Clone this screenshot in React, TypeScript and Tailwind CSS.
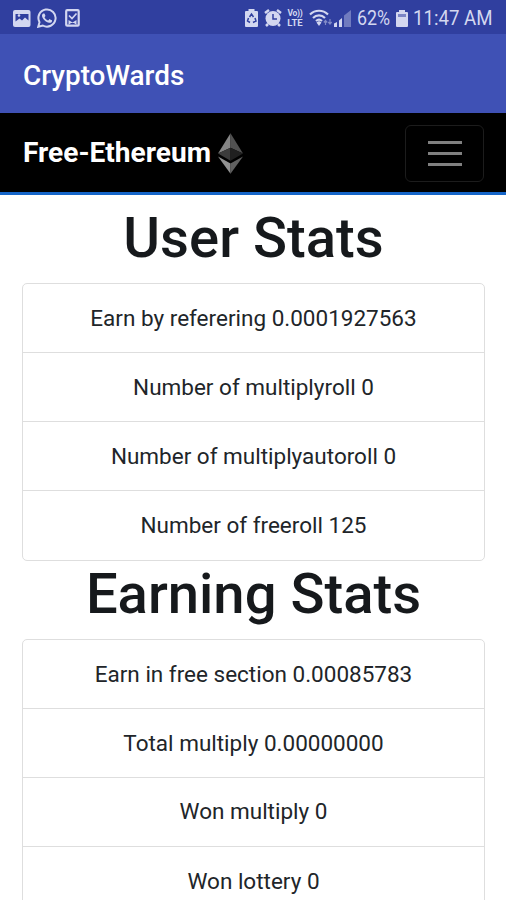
import type { ReactNode } from "react";

const userStats = [
  "Earn by referering 0.0001927563",
  "Number of multiplyroll 0",
  "Number of multiplyautoroll 0",
  "Number of freeroll 125",
];

const earningStats = [
  "Earn in free section 0.00085783",
  "Total multiply 0.00000000",
  "Won multiply 0",
  "Won lottery 0",
];

function StatusBar() {
  return (
    <div className="flex h-[34px] items-center bg-[#303f9f] pl-[13px] pr-[13px] pt-[2px] text-[#d3d7f0]">
      <svg width="18" height="17" viewBox="0 0 18 17">
        <rect x="0" y="0" width="17.5" height="17" rx="2" fill="currentColor" />
        <path d="M2.5 4h13v6.5l-3.5-3-3 3-2.5-2-4 3z" fill="#303f9f" />
        <circle cx="6" cy="5.5" r="1.3" fill="currentColor" />
      </svg>
      <svg className="ml-[6px]" width="20" height="20" viewBox="0 0 24 24" fill="currentColor">
        <path d="M17.5 14.4c-.3-.2-1.8-.9-2-1-.3-.1-.5-.1-.7.2l-1 1.200c-.2.200-.3.200-.6.100-.3-.2-1.300-.5-2.400-1.500-.9-.8-1.500-1.800-1.700-2.100-.1-.3 0-.4.200-.6l.8-1c.1-.2 0-.4 0-.5l-1-2.200c-.2-.6-.5-.5-.7-.5h-.6c-.2 0-.5.100-.8.400-.3.300-1 1-1 2.500s1.100 2.900 1.200 3.100c.1.200 2.100 3.200 5.100 4.500 2.500 1 3 .8 3.500.8.600-.1 1.800-.7 2-1.400.3-.7.3-1.300.2-1.400 0-.2-.2-.3-.5-.6z" />
        <path d="M1.500 22.500 3 17A10.300 10.300 0 1 1 7 21z" fill="none" stroke="currentColor" strokeWidth="2.400" />
      </svg>
      <svg className="ml-[8px]" width="15" height="18" viewBox="0 0 15 18" fill="none" stroke="currentColor">
        <rect x="1.200" y="1.200" width="12.500" height="15.500" rx="1" strokeWidth="2.200" />
        <path d="m4 6.500 3 3 4.500-5" strokeWidth="1.700" />
        <path d="M3.500 11 7.500 13.500 11.500 11v5l-2.500-2h-3l-2.500 2z" fill="currentColor" stroke="none" />
      </svg>
      <div className="flex-1" />
      <svg width="13" height="18" viewBox="0 0 13 18">
        <path d="M3.500 0h6v2H12a1 1 0 0 1 1 1v14a1 1 0 0 1-1 1H1a1 1 0 0 1-1-1V3a1 1 0 0 1 1-1h2.500z" fill="currentColor" />
        <path d="m4.500 8 2-3 2 3M10 9l1 3-3 1.500M5 13.500 2.500 12 3.500 9" fill="none" stroke="#303f9f" strokeWidth="1.500" />
      </svg>
      <svg className="ml-[6px]" width="18" height="18" viewBox="0 0 18 18">
        <path d="m1 4 4-3M17 4l-4-3M4 15l-2 2M14 15l2 2" stroke="currentColor" strokeWidth="2.500" />
        <circle cx="9" cy="9.500" r="7.500" fill="currentColor" />
        <path d="M9 5v5h4" fill="none" stroke="#303f9f" strokeWidth="1.500" />
      </svg>
      <div className="ml-[4px] flex w-[18px] flex-col items-center font-bold">
        <span className="block h-[9px] text-[8.500px] leading-[9px] tracking-[-0.300px]">Vo))</span>
        <span className="block h-[10px] text-[9.500px] leading-[10px]">LTE</span>
      </div>
      <svg className="ml-[5px]" width="24" height="18" viewBox="0 0 24 18" fill="none" stroke="currentColor">
        <path d="M1 5.500c5-5 13-5 18 0M4 9c3.500-3.500 8.500-3.500 12 0M7 12c2-1.800 4-1.800 6 0" strokeWidth="2.200" />
        <path d="m7.500 13.500 2.500-1.500 2.500 1.500-2.500 3.500z" fill="currentColor" stroke="none" />
        <path d="M16.500 16v-4.500m-1.700 2 1.700-2 1.700 2M21 10v5m-1.700-2 1.700 2 1.700-2" strokeWidth="1.200" opacity="0.500" />
      </svg>
      <svg className="ml-[1px]" width="17" height="17" viewBox="0 0 17 17" fill="currentColor">
        <path d="M0 13.500 3 12v5H0zM5 10.500 8 8v9H5z" />
        <path d="M10 5.500 17 0v17h-7z" opacity="0.400" />
      </svg>
      <span className="ml-[6px] w-[34px] origin-left scale-x-[0.870] whitespace-nowrap text-[20.500px] leading-none">62%</span>
      <svg className="ml-[5px]" width="12" height="17" viewBox="0 0 12 17">
        <path d="M3 0h6v2h2a1 1 0 0 1 1 1v13a1 1 0 0 1-1 1H1a1 1 0 0 1-1-1V3a1 1 0 0 1 1-1h2z" fill="currentColor" />
        <path d="M2 4h8v3H2z" fill="#7b85c5" />
      </svg>
      <span className="ml-[5px] w-[80px] origin-left scale-x-[0.910] whitespace-nowrap text-[20.500px] leading-none">11:47 AM</span>
    </div>
  );
}

function EthereumMark() {
  return (
    <svg className="ml-[7px] mt-[2px]" width="25" height="41" viewBox="0 0 26 42">
      <path d="M13 0 0 21l13-6z" fill="#858585" />
      <path d="m13 0 13 21-13-6z" fill="#515151" />
      <path d="M0 21l13-6v13.500z" fill="#3c3c3c" />
      <path d="m26 21-13-6v13.500z" fill="#202020" />
      <path d="m0 24 13 7.500V42z" fill="#929292" />
      <path d="m26 24-13 7.500V42z" fill="#606060" />
    </svg>
  );
}

function Heading({ children }: { children: ReactNode }) {
  return (
    <h1 className="mb-[11.600px] pl-px text-center text-[56.200px] font-medium leading-[67px] text-[#16191c]">
      {children}
    </h1>
  );
}

function StatList({ items }: { items: string[] }) {
  return (
    <ul className="ml-[22px] mr-[21px] divide-y divide-[#dedede] rounded-[5px] border border-[#dedede] text-center text-[22.500px] text-[#212529]">
      {items.map((item) => (
        <li key={item} className="flex h-[68.800px] items-center justify-center whitespace-nowrap pt-px">
          {item}
        </li>
      ))}
    </ul>
  );
}

export default function App() {
  return (
    <div className="h-[900px] w-[506px] overflow-hidden bg-white font-['Roboto',sans-serif]">
      <StatusBar />
      <header className="flex h-[79px] items-center bg-[#3f51b5] pl-[23px] pt-[4px] text-[27.900px] font-medium text-white">
        CryptoWards
      </header>
      <nav className="flex h-[82px] items-center border-b-[3px] border-[#1565c8] bg-black pl-[23px] pr-[22px] text-white">
        <span className="whitespace-nowrap pt-[2px] text-[28.100px] font-bold">Free-Ethereum</span>
        <EthereumMark />
        <button aria-label="Menu" className="ml-auto mt-px flex h-[57px] w-[79px] flex-col items-center justify-center gap-[8px] rounded-[6px] border border-[#1c1c1c]">
          <i className="h-[3px] w-[34px] bg-[#808080]" />
          <i className="h-[3px] w-[34px] bg-[#808080]" />
          <i className="h-[3px] w-[34px] bg-[#808080]" />
        </button>
      </nav>
      <main className="pt-[9.900px]">
        <Heading>User Stats</Heading>
        <StatList items={userStats} />
        <Heading>Earning Stats</Heading>
        <StatList items={earningStats} />
      </main>
    </div>
  );
}
